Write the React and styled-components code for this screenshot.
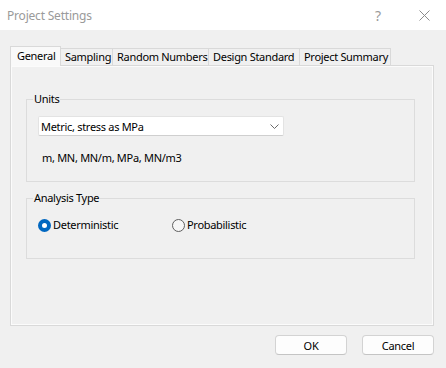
import React from "react";
import styled, { createGlobalStyle } from "styled-components";

const GlobalStyle = createGlobalStyle`
  body {
    margin: 0;
    background: #f0f0f0;
    font-family: "Noto Sans", "Open Sans", sans-serif;
    font-size: 11px;
    letter-spacing: -0.3px;
    color: #000;
  }
`;

export default function App() {
  const tabs = [
    { label: "General", width: 51 },
    { label: "Sampling", width: 52 },
    { label: "Random Numbers", width: 96 },
    { label: "Design Standard", width: 91 },
    { label: "Project Summary", width: 91 },
  ];
  return (
    <Window>
      <GlobalStyle />
      <TitleBar>
        <Title>Project Settings</Title>
        <CaptionButton>?</CaptionButton>
        <CaptionButton>
          <svg width="11" height="11" viewBox="0 0 11 11">
            <path d="M0.5 0.5 L10.5 10.5 M10.5 0.5 L0.5 10.5" stroke="#8c8c8c" strokeWidth="1" fill="none" />
          </svg>
        </CaptionButton>
      </TitleBar>
      <Body>
        <TabRow>
          {tabs.map((tab, index) => (
            <Tab key={tab.label} $width={tab.width} $active={index === 0}>
              {tab.label}
            </Tab>
          ))}
        </TabRow>
        <Panel>
          <Group>
            <Legend>Units</Legend>
            <Combo>
              <span>Metric, stress as MPa</span>
              <svg width="9" height="5" viewBox="0 0 9 5">
                <path d="M0.5 0.5 L4.5 4.5 L8.5 0.5" stroke="#6a6a6a" strokeWidth="1" fill="none" />
              </svg>
            </Combo>
            <UnitList>m, MN, MN/m, MPa, MN/m3</UnitList>
          </Group>
          <Group $gap>
            <Legend>Analysis Type</Legend>
            <RadioRow>
              <Radio>
                <RadioDot $checked />
                Deterministic
              </Radio>
              <Radio>
                <RadioDot />
                Probabilistic
              </Radio>
            </RadioRow>
          </Group>
        </Panel>
        <Footer>
          <Button>OK</Button>
          <Button>Cancel</Button>
        </Footer>
      </Body>
    </Window>
  );
}

const Window = styled.div`
  width: 446px;
  height: 368px;
  display: flex;
  flex-direction: column;
  background: #f0f0f0;
  overflow: hidden;
`;

const TitleBar = styled.div`
  height: 30px;
  background: #fff;
  display: flex;
  align-items: center;
  padding-left: 7px;
`;

const Title = styled.div`
  flex: 1;
  font-size: 12px;
  letter-spacing: -0.2px;
  color: #9a9a9a;
  padding-top: 1px;
`;

const CaptionButton = styled.div`
  width: 46px;
  height: 30px;
  display: flex;
  align-items: center;
  justify-content: center;
  color: #9a9a9a;
  font-size: 14px;
  &:last-child {
    margin-right: -1px;
  }
`;

const Body = styled.div`
  flex: 1;
  display: flex;
  flex-direction: column;
  padding: 16px 12px 0 10px;
`;

const TabRow = styled.div`
  display: flex;
  align-items: flex-end;
  height: 19px;
`;

const Tab = styled.div`
  box-sizing: border-box;
  width: ${(p) => p.$width}px;
  height: ${(p) => (p.$active ? 20 : 17)}px;
  border: 1px solid #d9d9d9;
  border-bottom: none;
  background: ${(p) => (p.$active ? "#f9f9f9" : "#f0f0f0")};
  padding: ${(p) => (p.$active ? "1px 0 0 6px" : "0 0 0 4px")};
  line-height: 16px;
  white-space: nowrap;
  position: relative;
  z-index: ${(p) => (p.$active ? 1 : 0)};
  margin-bottom: ${(p) => (p.$active ? -1 : 0)}px;
  & + & {
    border-left: none;
  }
`;

const Panel = styled.div`
  box-sizing: border-box;
  height: 261px;
  border: 1px solid #d9d9d9;
  box-shadow: inset 0 0 0 1px #fbfbfb;
  padding: 25px 18px 0 15px;
`;

const Group = styled.fieldset`
  margin: ${(p) => (p.$gap ? "8px 0 0" : "0")};
  border: 1px solid #dcdcdc;
  padding: 0 11px;
  min-width: 0;
`;

const Legend = styled.legend`
  padding: 0 1px;
  margin-left: -5px;
  line-height: 16px;
`;

const Combo = styled.div`
  box-sizing: border-box;
  margin-top: 9px;
  width: 246px;
  height: 20px;
  background: #fff;
  border: 1px solid #e3e3e3;
  border-bottom-color: #cfcfcf;
  border-radius: 2px;
  display: flex;
  align-items: center;
  justify-content: space-between;
  padding: 0 4px 0 2px;
`;

const UnitList = styled.div`
  margin: 14px 0 15px 4px;
  line-height: 16px;
`;

const RadioRow = styled.div`
  display: grid;
  grid-template-columns: 134px auto;
  padding: 11px 0 25px;
`;

const Radio = styled.label`
  display: flex;
  align-items: center;
  gap: 2px;
  line-height: 16px;
`;

const RadioDot = styled.span`
  box-sizing: border-box;
  width: 13px;
  height: 13px;
  border-radius: 50%;
  border: ${(p) => (p.$checked ? "4px solid #0067c0" : "1px solid #5f5f5f")};
  background: ${(p) => (p.$checked ? "#fff" : "#f6f6f6")};
`;

const Footer = styled.div`
  display: flex;
  justify-content: flex-end;
  gap: 15px;
  margin-top: 9px;
`;

const Button = styled.div`
  box-sizing: border-box;
  width: 72px;
  height: 20px;
  background: #fdfdfd;
  border: 1px solid #d3d3d3;
  border-bottom-color: #c4c4c4;
  border-radius: 4px;
  display: flex;
  align-items: center;
  justify-content: center;
`;
